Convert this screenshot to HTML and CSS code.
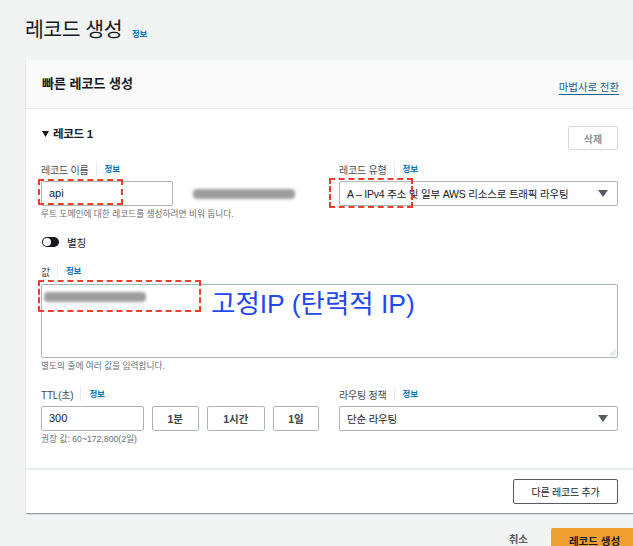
FILE: index.html
```html
<!DOCTYPE html>
<html lang="ko">
<head>
<meta charset="utf-8">
<title>레코드 생성</title>
<link rel="stylesheet" href="styles.css">
</head>
<body>
<div class="page">
  <header class="page-head">
    <h1 class="page-title">레코드 생성</h1>
    <a class="info info-title">정보</a>
  </header>

  <section class="card">
    <div class="card-head">
      <h2 class="card-title">빠른 레코드 생성</h2>
      <a class="wizard">마법사로 전환</a>
    </div>

    <div class="record">
      <div class="record-top">
        <div class="record-title">
          <svg class="caret" width="7" height="6" viewBox="0 0 7 6"><path d="M0 0H7L3.5 6Z" fill="#16191f"/></svg>
          레코드 1
        </div>
        <button class="btn btn-del">삭제</button>
      </div>

      <div class="grid grid-first">
        <div class="field">
          <div class="label"><span>레코드 이름</span><a class="info">정보</a></div>
          <div class="name-row">
            <div class="input input-name">api<span class="mark mark-name"></span></div>
            <span class="blur blur-suffix"></span>
          </div>
          <p class="help">루트 도메인에 대한 레코드를 생성하려면 비워 둡니다.</p>
        </div>
        <div class="field">
          <div class="label"><span>레코드 유형</span><a class="info">정보</a></div>
          <div class="select">
            <span>A – IPv4 주소 및 일부 AWS 리소스로 트래픽 라우팅</span>
            <svg class="arrow" width="10" height="7" viewBox="0 0 10 7"><path d="M0 0H10L5 7Z" fill="#545b64"/></svg>
            <span class="mark mark-type"></span>
          </div>
        </div>
      </div>

      <div class="toggle-row">
        <span class="toggle"><span class="knob"></span></span>
        <span class="toggle-label">별칭</span>
      </div>

      <div class="field field-value">
        <div class="label"><span>값</span><a class="info">정보</a></div>
        <div class="textarea">
          <span class="blur blur-value"></span>
          <span class="mark mark-value"></span>
          <span class="note">고정IP (탄력적 IP)</span>
          <svg class="grip" width="7" height="7" viewBox="0 0 7 7"><path d="M6.5 1L1 6.5M6.5 4L4 6.5" stroke="#9aa" stroke-width="0.8"/></svg>
        </div>
        <p class="help">별도의 줄에 여러 값을 입력합니다.</p>
      </div>

      <div class="grid grid-ttl">
        <div class="field">
          <div class="label"><span>TTL(초)</span><a class="info">정보</a></div>
          <div class="ttl-row">
            <div class="input input-ttl">300</div>
            <button class="btn btn-ttl btn-1m">1분</button>
            <button class="btn btn-ttl btn-1h">1시간</button>
            <button class="btn btn-ttl btn-1d">1일</button>
          </div>
          <p class="help">권장 값: 60~172,800(2일)</p>
        </div>
        <div class="field">
          <div class="label"><span>라우팅 정책</span><a class="info">정보</a></div>
          <div class="select">
            <span>단순 라우팅</span>
            <svg class="arrow" width="10" height="7" viewBox="0 0 10 7"><path d="M0 0H10L5 7Z" fill="#545b64"/></svg>
          </div>
        </div>
      </div>
    </div>

    <div class="card-foot">
      <button class="btn btn-add">다른 레코드 추가</button>
    </div>
  </section>

  <div class="actions">
    <a class="cancel">취소</a>
    <button class="btn-primary">레코드 생성</button>
  </div>
</div>
</body>
</html>
```

FILE: styles.css
```css
* { box-sizing: border-box; }

html, body {
  margin: 0;
  padding: 0;
  width: 633px;
  height: 546px;
  overflow: hidden;
  background: #f2f3f3;
  font-family: "Liberation Sans", "Noto Sans CJK KR", sans-serif;
  color: #16191f;
}

.page { width: 633px; }

.page-head {
  height: 60px;
  padding: 17px 0 0 25px;
  display: flex;
  align-items: baseline;
}

.page-title {
  margin: 0;
  font-size: 20.5px;
  line-height: 26px;
  font-weight: 400;
  letter-spacing: -0.5px;
  color: #16191f;
}

.info {
  color: #0073bb;
  font-size: 8.5px;
  font-weight: 700;
  letter-spacing: -0.2px;
}

.info-title { margin-left: 10px; }

.card {
  margin-left: 26px;
  width: 612px;
  background: #fff;
  box-shadow: 0 1px 1px 0 rgba(0, 28, 36, 0.3), 1px 1px 1px 0 rgba(0, 28, 36, 0.15);
}

.card-head {
  height: 49px;
  background: #fafafa;
  border-bottom: 1px solid #eaeded;
  padding: 0 19px 0 16px;
  display: flex;
  align-items: center;
  justify-content: space-between;
}

.card-title {
  margin: 0;
  font-size: 13px;
  font-weight: 700;
  line-height: 18px;
}

.wizard {
  margin-top: 5px;
  font-size: 10.5px;
  letter-spacing: -0.1px;
  color: #1b5e88;
  text-decoration: underline;
  text-underline-offset: 3px;
}

.record {
  padding: 17px 20px 22px 15px;
}

.record-top {
  height: 24px;
  display: flex;
  justify-content: space-between;
  align-items: flex-start;
}

.record-title {
  font-size: 11.5px;
  font-weight: 700;
  letter-spacing: -0.3px;
  line-height: 16px;
  display: flex;
  align-items: center;
  gap: 4px;
}

.caret { margin-left: 1px; }

.btn {
  font-family: inherit;
  background: #fff;
  border: 1px solid #aab7b8;
  border-radius: 2px;
  padding: 0;
  font-weight: 700;
  color: #545b64;
}

.btn-del {
  width: 50px;
  height: 24px;
  font-size: 10px;
  color: #879596;
  border-color: #d5dbdb;
}

.grid {
  display: grid;
  grid-template-columns: 278px 279px;
  column-gap: 20px;
}

.grid-first { margin-top: 12px; }
.grid-ttl { margin-top: 14px; }

.label {
  height: 14px;
  display: flex;
  align-items: center;
  font-size: 10px;
  letter-spacing: -0.2px;
  color: #444b54;
}

.label .info {
  margin-left: 7px;
  padding-left: 8px;
  border-left: 1px solid #eaeded;
  line-height: 14px;
}

.name-row {
  margin-top: 5px;
  display: flex;
  align-items: center;
}

.input {
  position: relative;
  height: 25px;
  border: 1px solid #aab7b8;
  border-radius: 2px;
  padding: 0 7px;
  font-size: 11px;
  line-height: 23px;
  color: #16191f;
}

.input-name { width: 132px; }

.blur {
  display: block;
  background: #8d8d8d;
  filter: blur(1.6px);
  border-radius: 4px;
  opacity: 0.85;
}

.blur-suffix {
  margin-left: 20px;
  width: 102px;
  height: 10px;
}

.mark {
  position: absolute;
  border: 2px dashed #e8402a;
  pointer-events: none;
}

.mark-name {
  left: -4px;
  top: -3px;
  width: 85px;
  height: 26px;
}

.mark-type {
  left: -11px;
  top: -4px;
  width: 84px;
  height: 30px;
}

.mark-value {
  left: -4px;
  top: -5px;
  width: 163px;
  height: 32px;
}

.help {
  margin: 2px 0 0;
  font-size: 8.7px;
  line-height: 13px;
  color: #687078;
}

.select {
  position: relative;
  margin-top: 5px;
  height: 25px;
  border: 1px solid #aab7b8;
  border-radius: 2px;
  padding: 0 8px 0 7px;
  display: flex;
  align-items: center;
  justify-content: space-between;
  font-size: 10.5px;
  letter-spacing: -0.2px;
}

.arrow { margin-right: 1px; }

.toggle-row {
  margin-top: 13px;
  height: 16px;
  display: flex;
  align-items: center;
}

.toggle {
  display: flex;
  align-items: center;
  width: 17px;
  height: 10px;
  border-radius: 5px;
  background: #16191f;
  padding: 0 1px;
  margin-left: 1px;
}

.knob {
  width: 8px;
  height: 8px;
  border-radius: 50%;
  background: #fff;
}

.toggle-label {
  margin-left: 8px;
  font-size: 10.5px;
  letter-spacing: -0.2px;
}

.field-value { margin-top: 14px; }

.textarea {
  position: relative;
  margin-top: 6px;
  height: 74px;
  border: 1px solid #aab7b8;
  border-radius: 2px;
}

.blur-value {
  position: absolute;
  left: 2px;
  top: 7px;
  width: 102px;
  height: 10px;
}

.note {
  position: absolute;
  left: 169px;
  top: 4px;
  font-size: 26.5px;
  line-height: 30px;
  color: #2447ef;
  white-space: nowrap;
}

.grip {
  position: absolute;
  right: 1px;
  bottom: 1px;
}

.ttl-row {
  margin-top: 5px;
  display: flex;
  gap: 8px;
}

.input-ttl { width: 104px; }

.btn-ttl {
  height: 25px;
  font-size: 10.5px;
  color: #3b424a;
}

.btn-1m { width: 48px; }
.btn-1h { width: 59px; }
.btn-1d { width: 47px; }

.card-foot {
  border-top: 2px solid #eaeded;
  padding: 9px 20px 9px 0;
  display: flex;
  justify-content: flex-end;
}

.btn-add {
  width: 105px;
  height: 25px;
  font-size: 10px;
  letter-spacing: -0.2px;
  color: #16191f;
  border-color: #545b64;
  font-weight: 400;
}

.actions {
  margin: 15px 0 0 26px;
  width: 612px;
  display: flex;
  justify-content: flex-end;
  align-items: flex-start;
}

.cancel {
  font-size: 10.5px;
  font-weight: 700;
  color: #545b64;
  margin-right: 23px;
  line-height: 22px;
}

.btn-primary {
  width: 87px;
  height: 24px;
  border: none;
  border-radius: 2px;
  background: #f0a030;
  font-family: inherit;
  font-size: 10.5px;
  font-weight: 700;
  color: #16191f;
  padding: 0;
}
```
